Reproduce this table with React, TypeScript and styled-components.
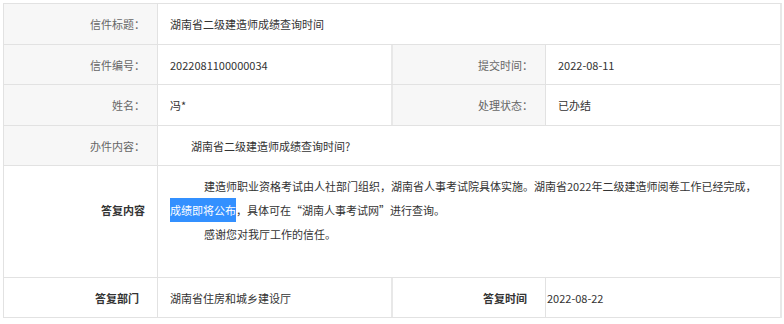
import React, { FC } from 'react';
import styled, { createGlobalStyle } from 'styled-components';

const line = '#e2e2e2';
const font = '"Microsoft YaHei", "Noto Sans CJK SC", "Noto Sans", sans-serif';

const GlobalStyle = createGlobalStyle`
  html, body {
    margin: 0;
    padding: 0;
    background: #ffffff;
  }
  body {
    font-family: ${font};
    font-size: 11px;
    color: #333333;
  }
`;

const Sheet = styled.section`
  margin: 3px 0 0 3px;
  width: 776px;
  border-top: 1px solid ${line};
  border-left: 1px solid ${line};
  border-right: 2px solid #e8e8e8;
`;

const Row = styled.div<{ $split?: boolean; $height: number }>`
  display: grid;
  grid-template-columns: ${({ $split }) => ($split ? '154px 233px 155px 1fr' : '154px 1fr')};
  height: ${({ $height }) => $height}px;
  border-bottom: 1px solid ${line};
`;

const Label = styled.div<{ $plain?: boolean; $strong?: boolean; $top?: number; $pad?: number }>`
  display: flex;
  justify-content: flex-end;
  align-items: ${({ $top }) => ($top ? 'flex-start' : 'center')};
  padding: ${({ $top }) => ($top ? `${$top}px` : '0')} ${({ $pad }) => $pad ?? 12}px 0 0;
  background: ${({ $plain }) => ($plain ? '#ffffff' : '#f7f7f7')};
  color: ${({ $strong }) => ($strong ? '#333333' : '#666666')};
  font-weight: ${({ $strong }) => ($strong ? 700 : 400)};
  line-height: 24px;
  border-right: 1px solid ${line};
  &:nth-child(3) {
    border-left: 2px solid #e8e8e8;
  }
`;

const Value = styled.div<{ $pad?: number; $indent?: number }>`
  display: flex;
  align-items: center;
  padding-left: ${({ $pad }) => $pad ?? 12}px;
  text-indent: ${({ $indent }) => $indent ?? 0}px;
  color: #333333;
  line-height: 24px;
`;

const Reply = styled.div`
  padding: 8px 12px 0 12px;
  color: #333333;
  line-height: 24px;
`;

const Para = styled.p`
  margin: 0;
  text-indent: 34px;
`;

const Selected = styled.span`
  display: inline-block;
  text-indent: 0;
  background: #3390ff;
  color: #ffffff;
  line-height: 24px;
`;

const App: FC = (): JSX.Element => (
  <>
    <GlobalStyle />
    <Sheet>
      <Row $height={40}>
        <Label>信件标题：</Label>
        <Value>湖南省二级建造师成绩查询时间</Value>
      </Row>
      <Row $split $height={39}>
        <Label>信件编号：</Label>
        <Value>2022081100000034</Value>
        <Label>提交时间：</Label>
        <Value>2022-08-11</Value>
      </Row>
      <Row $split $height={40}>
        <Label>姓名：</Label>
        <Value>冯*</Value>
        <Label>处理状态：</Label>
        <Value>已办结</Value>
      </Row>
      <Row $height={39}>
        <Label>办件内容：</Label>
        <Value $indent={21}>湖南省二级建造师成绩查询时间?</Value>
      </Row>
      <Row $height={111}>
        <Label $plain $strong $top={32}>答复内容</Label>
        <Reply>
          <Para>
            建造师职业资格考试由人社部门组织，湖南省人事考试院具体实施。湖南省2022年二级建造师阅卷工作已经完成，
            <br />
            <Selected>成绩即将公布</Selected>，具体可在“湖南人事考试网”进行查询。
          </Para>
          <Para>感谢您对我厅工作的信任。</Para>
        </Reply>
      </Row>
      <Row $split $height={39}>
        <Label $plain $strong $pad={18}>答复部门</Label>
        <Value>湖南省住房和城乡建设厅</Value>
        <Label $plain $strong $pad={18}>答复时间</Label>
        <Value $pad={1}>2022-08-22</Value>
      </Row>
    </Sheet>
  </>
);

export default App;
